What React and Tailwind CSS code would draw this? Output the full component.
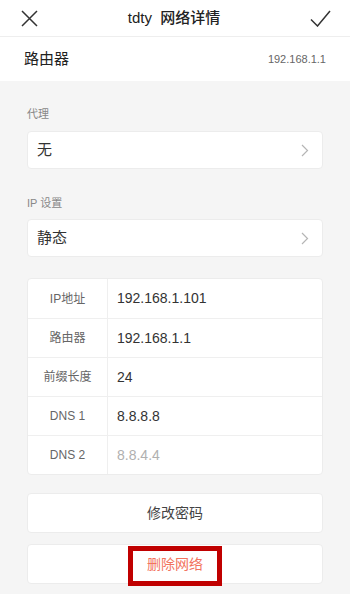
import React from 'react';

const font = { fontFamily: '"Liberation Sans", "Noto Sans CJK SC", sans-serif' };

const rows = [
  { label: 'IP地址', value: '192.168.1.101' },
  { label: '路由器', value: '192.168.1.1' },
  { label: '前缀长度', value: '24' },
  { label: 'DNS 1', value: '8.8.8.8' },
  { label: 'DNS 2', value: '8.8.4.4', muted: true },
];

const Chevron = () => (
  <svg width="8" height="13" viewBox="0 0 8 13" fill="none" className="shrink-0">
    <path d="M1 1l5.5 5.5L1 12" stroke="#b5b5b5" strokeWidth="1.2" />
  </svg>
);

const SelectCard = ({ text }) => (
  <div className="h-[38px] bg-white rounded-[4px] border border-[#ececec] flex items-center justify-between pl-[9px] pr-[13px]">
    <span className="text-[15px] text-[#333]">{text}</span>
    <Chevron />
  </div>
);

export default function App() {
  return (
    <div className="w-[350px] h-[594px] bg-[#f5f5f5] overflow-hidden flex flex-col" style={font}>
      <div className="h-[37px] bg-white border-b border-[#eeeeee] flex items-center justify-between px-[21px] shrink-0">
        <svg width="17" height="17" viewBox="0 0 17 17">
          <path d="M1 1l15 15M16 1L1 16" stroke="#333" strokeWidth="1.5" />
        </svg>
        <span className="text-[15px] text-[#222] font-medium">tdty&nbsp; 网络详情</span>
        <svg width="21" height="17" viewBox="0 0 21 17" className="-mr-[2px]">
          <path d="M1 9.5l6.5 6.5L20 1" stroke="#333" strokeWidth="1.5" fill="none" />
        </svg>
      </div>
      <div className="h-[44px] bg-white flex items-center justify-between pl-[24px] pr-[24px] shrink-0">
        <span className="text-[15px] text-[#222]">路由器</span>
        <span className="text-[11px] text-[#666]">192.168.1.1</span>
      </div>

      <div className="px-[27px] pt-[25px] flex flex-col">
        <div className="text-[11px] text-[#888] leading-[16px] mb-[9px]">代理</div>
        <SelectCard text="无" />
        <div className="text-[11px] text-[#888] leading-[16px] mt-[26px] mb-[8px]">IP 设置</div>
        <SelectCard text="静态" />

        <div className="mt-[21px] bg-white rounded-[4px] border border-[#ececec] overflow-hidden">
          {rows.map((r, i) => (
            <div key={r.label} className={`flex h-[39px] ${i > 0 ? 'border-t border-[#efefef]' : ''}`}>
              <div className="w-[80px] shrink-0 border-r border-[#efefef] flex items-center justify-center text-[12px] text-[#666]">
                {r.label}
              </div>
              <div className={`flex items-center pl-[9px] text-[14px] ${r.muted ? 'text-[#b0b0b0]' : 'text-[#333]'}`}>
                {r.value}
              </div>
            </div>
          ))}
        </div>

        <div className="mt-[18px] h-[40px] bg-white rounded-[4px] border border-[#ececec] flex items-center justify-center text-[14px] text-[#444]">
          修改密码
        </div>
        <div className="relative mt-[11px] h-[40px] bg-white rounded-[4px] border border-[#ececec] flex items-center justify-center text-[14px] text-[#f2735e]">
          删除网络
          <div className="absolute left-[100px] top-[1px] w-[94px] h-[40px] border-[5px] border-[#c00000]" />
        </div>
      </div>
    </div>
  );
}
